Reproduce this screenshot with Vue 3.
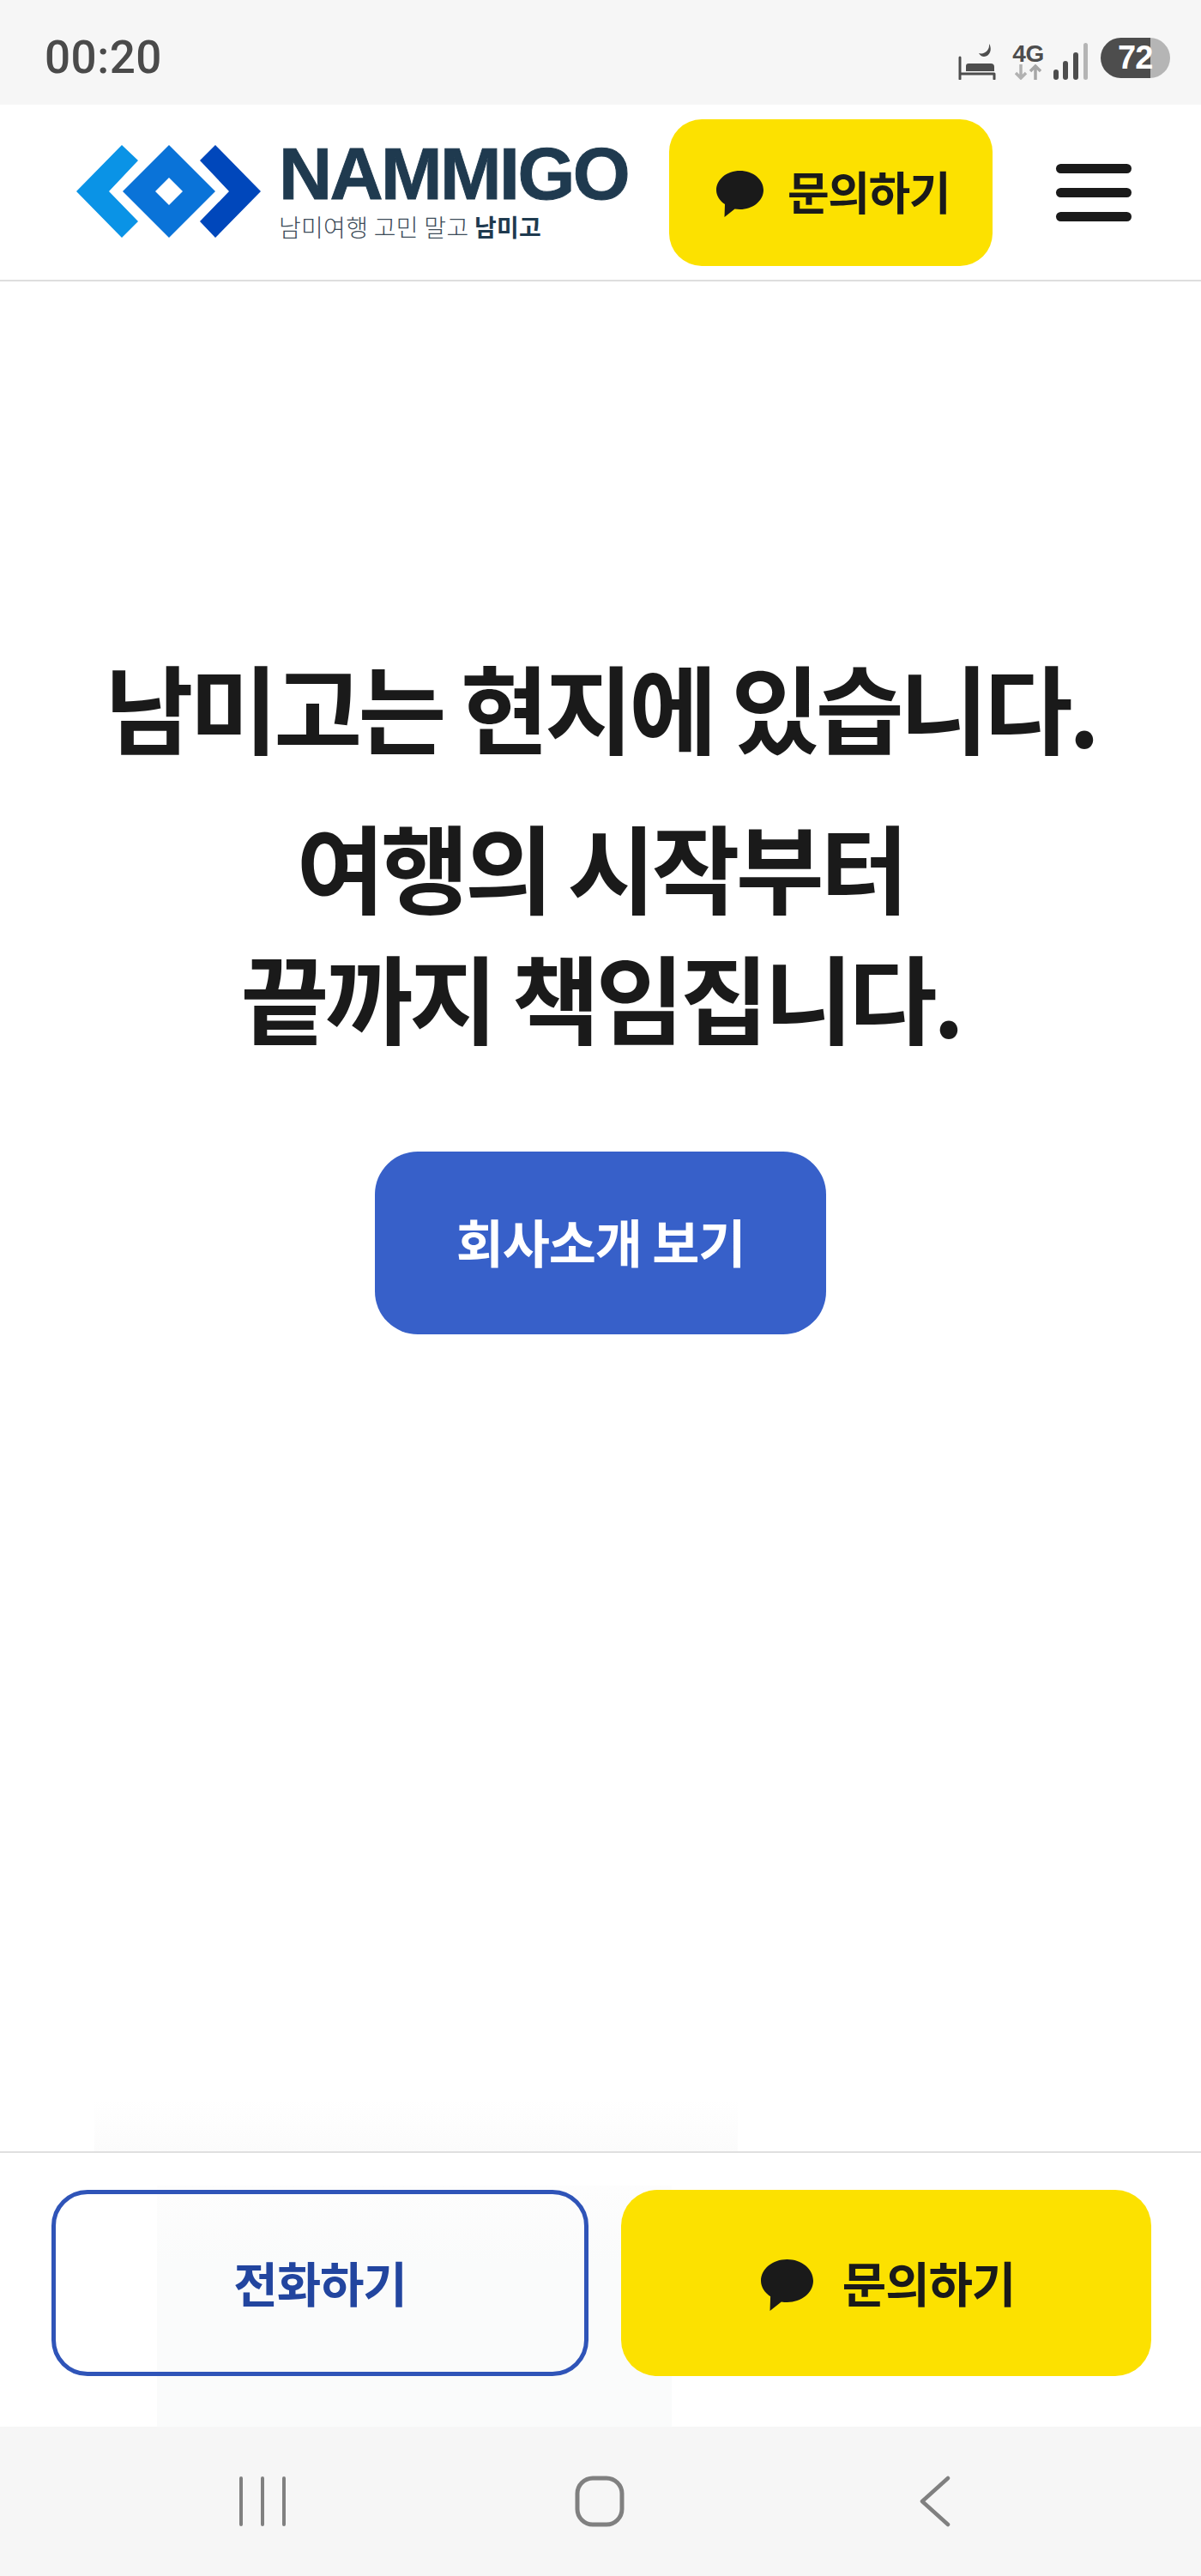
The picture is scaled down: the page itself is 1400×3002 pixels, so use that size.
<script setup>
const statusTime = '00:20'
const batteryLevel = 72
</script>

<template>
  <div class="screen">
    <div class="status-bar">
      <span class="time">{{ statusTime }}</span>
      <div class="status-icons">
        <svg class="bed" width="44" height="42" viewBox="0 0 44 42">
          <path d="M36 0C40 6 37 15 30 15C28 15 26 14 24 11C30 13 37 8 36 0z" fill="#4d4d4d" />
          <path d="M2 16v25M2 35h40M42 35v6" stroke="#4d4d4d" stroke-width="3" stroke-linecap="round" fill="none" />
          <path d="M9 32v-6q0-3 3-3h26q4 0 4 4v5z" fill="#4d4d4d" />
        </svg>
        <div class="network">
          <span class="net-label">4G</span>
          <svg width="31" height="18" viewBox="0 0 31 18">
            <path d="M7 0v16M1 10l6 6l6-6" stroke="#b2b2b2" stroke-width="3.500" fill="none" />
            <path d="M24 18V2M18 8l6-6l6 6" stroke="#a6a6a6" stroke-width="3.500" fill="none" />
          </svg>
        </div>
        <svg class="signal" width="40" height="43" viewBox="0 0 40 43">
          <rect x="0" y="31" width="6" height="12" rx="3" fill="#4d4d4d" />
          <rect x="11" y="21" width="6" height="22" rx="3" fill="#4d4d4d" />
          <rect x="23" y="11" width="6" height="32" rx="3" fill="#4d4d4d" />
          <rect x="35" y="0" width="5" height="43" rx="2.5" fill="#b5b5b5" />
        </svg>
        <div class="battery">{{ batteryLevel }}</div>
      </div>
    </div>

    <header class="site-header">
      <div class="logo">
        <svg class="logo-mark" width="216" height="108" viewBox="89 171 216 108">
          <polygon points="89,225 142,171 161,189 127,225 161,260 142,279" fill="#0a93e6" />
          <path d="M143 225L197 171L251 225L197 279ZM181 225L197 241L213 225L197 209Z" fill="#0a73d8" fill-rule="evenodd" />
          <polygon points="233,189 251,171 304,225 251,279 233,260 267,225" fill="#0047bb" />
        </svg>
        <div class="logo-text">
          <span class="logo-name">NAMMIGO</span>
          <span class="logo-sub">남미여행 고민 말고 <b>남미고</b></span>
        </div>
      </div>
      <button class="ask-btn ask-btn-top">
        <svg width="55" height="54" viewBox="0 0 55 54">
          <path d="M27.5 0C42.7 0 55 10 55 22.5S42.7 45 27.5 45c-2 0-4-.2-6-.5L9.500 54L10 39C4 35 0 29 0 22.500C0 10 12.300 0 27.500 0z" fill="#1a1a1a" />
        </svg>
        <span>문의하기</span>
      </button>
      <button class="menu-btn" aria-label="menu">
        <i></i><i></i><i></i>
      </button>
    </header>

    <main class="hero">
      <h1 class="hero-title">남미고는 현지에 있습니다.</h1>
      <h2 class="hero-sub">여행의 시작부터<br />끝까지 책임집니다.</h2>
      <button class="about-btn">회사소개 보기</button>
    </main>

    <div class="bottom-bar">
      <div class="ghost-top"></div>
      <div class="ghost"></div>
      <button class="call-btn">전화하기</button>
      <button class="ask-btn ask-btn-bottom">
        <svg width="61" height="60" viewBox="0 0 55 54">
          <path d="M27.5 0C42.7 0 55 10 55 22.5S42.7 45 27.5 45c-2 0-4-.2-6-.5L9.500 54L10 39C4 35 0 29 0 22.500C0 10 12.300 0 27.500 0z" fill="#1a1a1a" />
        </svg>
        <span>문의하기</span>
      </button>
    </div>

    <nav class="nav-bar">
      <svg width="54" height="58" viewBox="0 0 54 58">
        <path d="M2 2v54M27 2v54M52 2v54" stroke="#808080" stroke-width="4" stroke-linecap="round" />
      </svg>
      <svg class="nav-home" width="58" height="60" viewBox="0 0 58 60">
        <rect x="3" y="3" width="52" height="54" rx="18" fill="none" stroke="#808080" stroke-width="5" />
      </svg>
      <svg class="nav-back" width="36" height="60" viewBox="0 0 36 60">
        <path d="M33 3L3 30L33 57" fill="none" stroke="#808080" stroke-width="4.500" stroke-linecap="round" stroke-linejoin="round" />
      </svg>
    </nav>
  </div>
</template>

<style scoped>
.screen {
  display: flex;
  flex-direction: column;
  width: 1400px;
  height: 3002px;
  background: #fff;
  font-family: "Noto Sans CJK KR", "Liberation Sans", sans-serif;
  color: #1a1a1a;
  overflow: hidden;
}

button {
  border: 0;
  padding: 0;
  font-family: inherit;
  cursor: pointer;
}

.status-bar {
  display: flex;
  justify-content: space-between;
  align-items: center;
  flex: none;
  height: 122px;
  padding: 0 36px 0 52px;
  box-sizing: border-box;
  background: #f6f6f6;
}

.time {
  font-family: Roboto, "Liberation Sans", sans-serif;
  font-weight: 500;
  font-size: 53px;
  letter-spacing: 0.500px;
  color: #4a4a4a;
  position: relative;
  top: 6px;
}

.status-icons {
  display: flex;
  align-items: flex-end;
  height: 47px;
  position: relative;
  top: 6px;
}

.bed {
  margin-right: 18px;
  margin-bottom: -2px;
}

.network {
  display: flex;
  flex-direction: column;
  align-items: center;
  width: 39px;
  margin-right: 10px;
  margin-bottom: -2px;
}

.net-label {
  font-family: "Liberation Sans", sans-serif;
  font-weight: 700;
  font-size: 28px;
  line-height: 24px;
  letter-spacing: -0.5px;
  color: #4d4d4d;
}

.signal {
  margin-right: 15px;
  margin-bottom: -2px;
}

.battery {
  width: 81px;
  height: 47px;
  border-radius: 24px;
  background: linear-gradient(to right, #4d4d4d 58px, #b5b5b5 58px);
  color: #fff;
  font-family: "Liberation Sans", sans-serif;
  font-weight: 700;
  font-size: 38px;
  line-height: 47px;
  padding-left: 20px;
  box-sizing: border-box;
  letter-spacing: -1px;
}

.site-header {
  display: flex;
  align-items: center;
  flex: none;
  height: 206px;
  padding: 0 0 0 89px;
  box-sizing: border-box;
  border-bottom: 2px solid #dedede;
}

.logo {
  display: flex;
  align-items: flex-start;
  gap: 20px;
}

.logo-text {
  display: flex;
  flex-direction: column;
  width: 434px;
}

.logo-name {
  font-family: "Liberation Sans", sans-serif;
  font-weight: 700;
  font-size: 86px;
  line-height: 66px;
  letter-spacing: -2.600px;
  color: #1f3a4f;
  -webkit-text-stroke: 1px #1f3a4f;
}

.logo-sub {
  margin-top: 14px;
  font-size: 28px;
  line-height: 30px;
  letter-spacing: 0.300px;
  font-weight: 300;
  color: #3d4c59;
  white-space: nowrap;
}

.logo-sub b {
  color: #1f3a4f;
  font-weight: 700;
}

.ask-btn {
  display: flex;
  align-items: center;
  justify-content: center;
  background: #fce100;
  color: #1a1a1a;
  font-weight: 700;
}

.ask-btn span {
  padding-bottom: 5px;
}

.ask-btn svg {
  margin-top: 4px;
}

.ask-btn-top {
  width: 377px;
  height: 171px;
  margin-left: 21px;
  padding-left: 5px;
  border-radius: 38px;
  gap: 28px;
  font-size: 53px;
  letter-spacing: -1.500px;
}

.menu-btn {
  display: flex;
  flex-direction: column;
  gap: 17px;
  width: 88px;
  margin-left: 74px;
  background: none;
}

.menu-btn i {
  display: block;
  height: 11px;
  border-radius: 6px;
  background: #1a1a1a;
}

.hero {
  flex: 1;
  display: flex;
  flex-direction: column;
  align-items: center;
  padding-top: 419px;
  text-align: center;
}

.hero-title,
.hero-sub {
  margin: 0;
  font-weight: 700;
  font-size: 112px;
  letter-spacing: -4.700px;
  white-space: nowrap;
}

.hero-title {
  line-height: 150px;
}

.hero-sub {
  margin-top: 35px;
  line-height: 152px;
}

.about-btn {
  width: 526px;
  height: 213px;
  margin-top: 106px;
  padding-bottom: 6px;
  border-radius: 50px;
  background: #3760c9;
  color: #fff;
  font-weight: 700;
  font-size: 60px;
  letter-spacing: -1.200px;
}

.bottom-bar {
  position: relative;
  display: flex;
  gap: 38px;
  flex: none;
  height: 321px;
  padding: 43px 58px 0 60px;
  box-sizing: border-box;
  border-top: 2px solid #dfdfdf;
}

.ghost-top {
  position: absolute;
  left: 110px;
  top: -62px;
  width: 750px;
  height: 60px;
  background: linear-gradient(to bottom, #fff, #fbfbfb);
}

.ghost {
  position: absolute;
  left: 183px;
  top: 38px;
  width: 600px;
  bottom: 0;
  background: linear-gradient(to bottom, #fdfdfd, #fafbfb 90px);
}

.call-btn,
.ask-btn-bottom {
  position: relative;
  height: 217px;
  border-radius: 42px;
  font-size: 56px;
  letter-spacing: -1.200px;
  font-weight: 700;
}

.call-btn {
  width: 626px;
  box-sizing: border-box;
  padding-bottom: 5px;
  border: 5px solid #2f54b8;
  background: transparent;
  color: #22459f;
}

.ask-btn-bottom {
  width: 618px;
  padding-left: 4px;
  gap: 34px;
}

.nav-bar {
  display: flex;
  align-items: center;
  flex: none;
  height: 174px;
  padding-left: 279px;
  box-sizing: border-box;
  background: #f6f6f6;
}

.nav-home {
  margin-left: 337px;
}

.nav-back {
  margin-left: 344px;
}
</style>

<style>
html,
body {
  margin: 0;
  background: #fff;
}
</style>
